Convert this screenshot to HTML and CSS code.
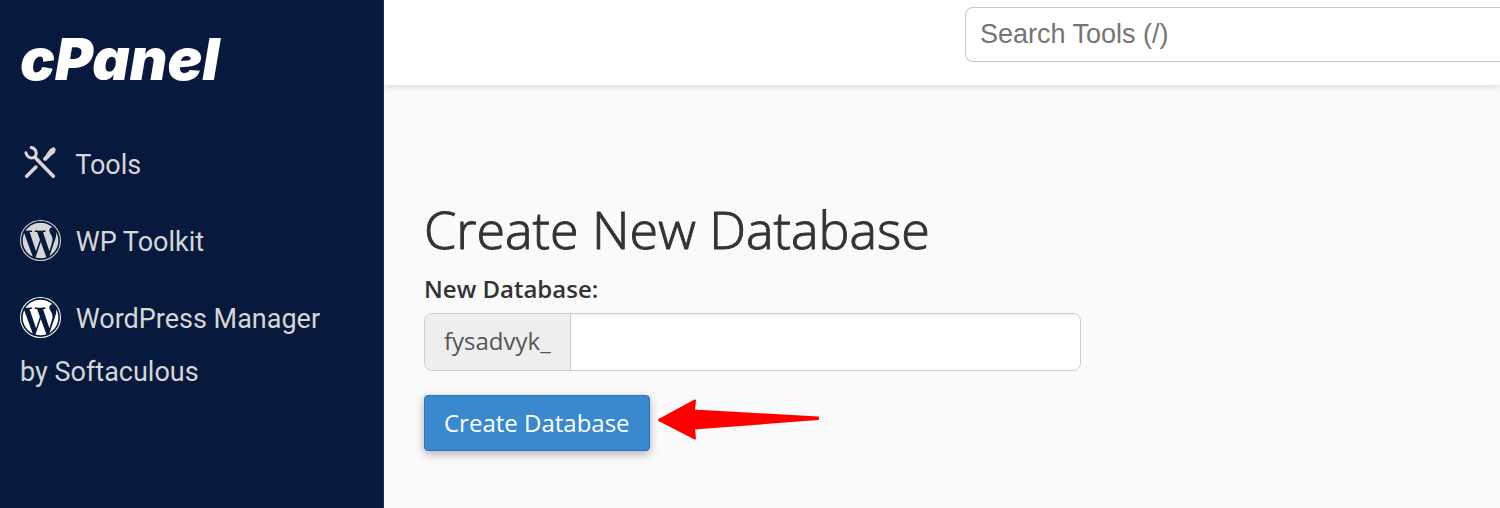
FILE: index.html
```
<!DOCTYPE html>
<html lang="en">
<head>
	<meta charset="UTF-8">
	<meta name="viewport" content="width=device-width, initial-scale=1.0">
	<title>cPanel - Create New Database</title>
	<link rel="stylesheet" href="styles.css">
</head>
<body>
	<svg width="0" height="0" class="defs">
		<symbol id="wp" viewBox="0 0 24 24">
			<circle cx="12" cy="12" r="11.7" fill="none" stroke="currentColor" stroke-width=".6"/>
			<path fill="currentColor" transform="translate(.4 .4) scale(.967)" d="M21.469 6.825c.84 1.537 1.318 3.3 1.318 5.175 0 3.979-2.156 7.456-5.363 9.325l3.295-9.527c.615-1.54.82-2.771.82-3.864 0-.405-.026-.78-.07-1.11m-7.981.105c.647-.03 1.232-.105 1.232-.105.582-.075.514-.93-.067-.899 0 0-1.755.135-2.88.135-1.064 0-2.85-.15-2.85-.15-.585-.03-.661.855-.075.885 0 0 .54.061 1.125.09l1.68 4.605-2.37 7.08L5.354 6.9c.649-.03 1.234-.1 1.234-.1.585-.075.516-.93-.065-.896 0 0-1.746.138-2.874.138-.2 0-.438-.008-.69-.015C4.911 3.15 8.235 1.215 12 1.215c2.809 0 5.365 1.072 7.286 2.833-.046-.003-.091-.009-.141-.009-1.06 0-1.812.923-1.812 1.914 0 .89.513 1.643 1.06 2.531.411.72.89 1.643.89 2.977 0 .915-.354 1.994-.821 3.479l-1.075 3.585-3.9-11.61zM12 22.784c-1.059 0-2.081-.153-3.048-.437l3.237-9.406 3.315 9.087c.024.053.05.101.078.149-1.12.393-2.325.609-3.582.609M1.211 12c0-1.564.336-3.05.935-4.39L7.29 21.709C3.694 19.96 1.212 16.271 1.211 12"/>
		</symbol>
	</svg>
	<div class="layout">
		<aside class="sidebar">
			<a href="#" class="logo">cPanel</a>
			<nav>
				<a href="#" class="nav-link">
					<svg class="icon" viewBox="0 0 40 40" fill="none" stroke="currentColor" stroke-linecap="round">
						<path d="M14.5 14L32.500 32.500M6.500 32.500L15.500 23.500" stroke-width="3.500"/>
						<path d="M11 4.500C15.500 5.500 17 9.500 15 13C11.500 16 7 14.500 5.800 9.500" stroke-width="3"/>
						<path d="M24.500 15.500L28 12" stroke-width="4"/>
						<path d="M25.500 11L29.500 5.500L33 4L35 6L34 9.500L28.500 14z" fill="currentColor" stroke="none"/>
					</svg>
					Tools
				</a>
				<a href="#" class="nav-link">
					<svg class="icon"><use href="#wp"/></svg>
					WP Toolkit
				</a>
				<a href="#" class="nav-link">
					<svg class="icon icon-bright"><use href="#wp"/></svg>
					WordPress Manager by Softaculous
				</a>
			</nav>
		</aside>
		<div class="main">
			<header class="topbar">
				<input type="text" class="search" placeholder="Search Tools (/)" aria-label="Search Tools">
			</header>
			<main class="content">
				<h1>Create New Database</h1>
				<form>
					<label for="dbname">New Database:</label>
					<div class="input-group">
						<span class="prefix">fysadvyk_</span>
						<input type="text" id="dbname" class="input">
					</div>
					<div class="actions">
						<button type="button" class="button">Create Database</button>
						<svg class="arrow" width="162" height="42" viewBox="0 0 162 42">
							<path d="M1 21L37 1.500L36 11.500L160 18.500V20L36 29.500L37 39.500z" fill="#f00" stroke="#f00" stroke-width="2" stroke-linejoin="round"/>
						</svg>
					</div>
				</form>
			</main>
		</div>
	</div>
</body>
</html>
```
FILE: styles.css
```
* {
	box-sizing: border-box;
}
body {
	margin: 0;
	font-family: 'Open Sans', 'Noto Sans', sans-serif;
	color: #333;
	background: #fafafa;
}
.defs {
	position: absolute;
}
.layout {
	display: flex;
	min-height: 100vh;
}
.sidebar {
	flex: none;
	width: 384px;
	padding: 28px 48px 28px 20px;
	background: #07193c;
	border-right: 1px solid #17284a;
}
.logo {
	display: block;
	margin-bottom: 49px;
	font: italic 900 58px/62px Inter, sans-serif;
	color: #fff;
	text-decoration: none;
}
.nav-link {
	display: block;
	margin-bottom: 24px;
	font: 27px/53px Roboto, sans-serif;
	color: #d6d6d6;
	text-decoration: none;
}
.icon {
	width: 41px;
	height: 41px;
	margin-right: 8px;
	vertical-align: -10px;
}
.icon-bright {
	color: #fff;
}
.main {
	flex: 1;
	min-width: 0;
}
.topbar {
	display: flex;
	justify-content: flex-end;
	height: 85px;
	padding-top: 7px;
	background: #fff;
	box-shadow: 0 1px 8px rgba(0, 0, 0, .16);
	clip-path: inset(0 0 -12px 0);
}
.search {
	width: 52%;
	max-width: 535px;
	height: 55px;
	padding: 0 14px;
	border: 1px solid #c0cad9;
	border-right: 0;
	border-radius: 8px 0 0 8px;
	font: 27px 'Liberation Sans', sans-serif;
}
.search::placeholder {
	color: #757575;
}
.content {
	padding: 108px 40px 40px;
}
h1 {
	margin: 0 0 4px;
	font-size: 52px;
	font-weight: 300;
	line-height: 72px;
	-webkit-text-stroke: 1px #333;
}
label {
	display: block;
	margin-bottom: 4px;
	font-size: 24px;
	font-weight: 600;
	line-height: 40px;
}
.input-group {
	display: flex;
	max-width: 657px;
	height: 58px;
	margin-bottom: 24px;
	border: 1px solid #ccc;
	border-radius: 8px;
	background: #fff;
	overflow: hidden;
}
.prefix {
	padding: 0 19px;
	border-right: 1px solid #ccc;
	font-size: 24px;
	line-height: 54px;
	color: #555;
	background: #eee;
}
.input {
	flex: 1;
	min-width: 0;
	padding: 0 20px;
	border: 0;
	font: inherit;
	font-size: 24px;
	box-shadow: inset 0 2px 2px rgba(0, 0, 0, .05);
}
.actions {
	display: flex;
	align-items: center;
	gap: 8px;
}
.button {
	height: 56px;
	padding: 0 19px 2px;
	border: 1px solid #2b73b3;
	border-radius: 4px;
	font: inherit;
	font-size: 24px;
	color: #fff;
	background: #3a89cf;
	box-shadow: 0 3px 10px rgba(0, 0, 0, .3);
	cursor: pointer;
}
.arrow {
	margin-bottom: 6px;
}
```
